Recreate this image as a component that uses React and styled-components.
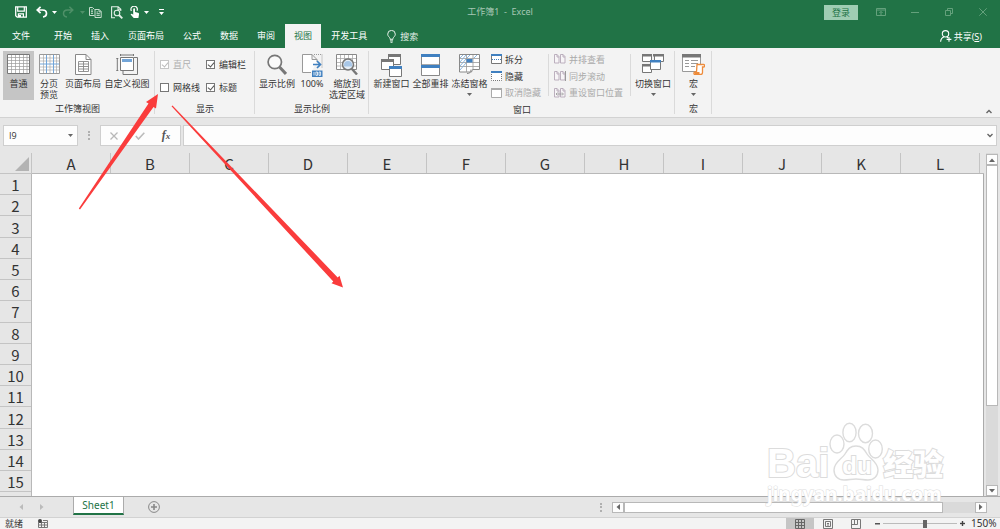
import styled, { createGlobalStyle } from 'styled-components';

const GlobalStyle = createGlobalStyle`
  * {
    box-sizing: border-box;
  }
  body {
    margin: 0;
    overflow: hidden;
    background-color: #e6e6e6;
    font-family: "Noto Sans", "Noto Sans CJK SC", sans-serif;
    font-size: 9px;
    line-height: 11px;
    color: #333;
  }
  button, input {
    font: inherit;
    color: inherit;
    margin: 0;
  }
  button {
    border: none;
    padding: 0;
    background: none;
    cursor: pointer;
  }
  svg {
    display: block;
    flex: none;
    fill: none;
  }
`;

const BLUE = '#4080c0';
const GRAY = '#777';

const tabs = ['开始', '插入', '页面布局', '公式', '数据', '审阅', '视图', '开发工具'];
const columns = ['A', 'B', 'C', 'D', 'E', 'F', 'G', 'H', 'I', 'J', 'K', 'L'];
const rows = [1, 2, 3, 4, 5, 6, 7, 8, 9, 10, 11, 12, 13, 14, 15];

/* ---------- icons ---------- */

const Caret = ({ color = '#666' }) => (
  <svg width="5" height="3" viewBox="0 0 5 3"><path d="M0 0h5L2.5 3z" fill={color} /></svg>
);

const SaveIcon = () => (
  <svg width="12" height="12" viewBox="0 0 12 12" stroke="#fff">
    <path d="M.7.8h10.6v10.4H2.2L.7 9.8z" strokeWidth="1.3" />
    <path d="M2.7 1v4.2h6.6V1M3.4 11V7.8h5V11" strokeWidth="1.2" />
    <path d="M4 9h2v2H4z" fill="#fff" stroke="none" />
  </svg>
);

const UndoIcon = () => (
  <svg width="12" height="12" viewBox="0 0 12 12" stroke="#fff" strokeWidth="1.7">
    <path d="M4.6.8L1.2 4l3.4 3.2M1.4 4h5.2c5 0 5.2 6.4.4 7" />
  </svg>
);

const RedoIcon = () => (
  <svg width="12" height="12" viewBox="0 0 12 12" stroke="#4f9068" strokeWidth="1.5">
    <path d="M7.4.8L10.8 4 7.4 7.2M10.6 4H5.4c-5 0-5.2 6.4-.4 7" />
  </svg>
);

const CopyIcon = () => (
  <svg width="13" height="12" viewBox="0 0 13 12" stroke="#c5dccd" strokeWidth="1">
    <path d="M5.5 9.5h-5v-8h3l2 2" />
    <path d="M6 3.5h4.2l2 2v6H6zM10 3.5v2.3h2.2M7.5 6h1.5M7.5 7.7h3.3M7.5 9.4h3.3M2 4h2M2 5.7h2M2 7.4h2" />
  </svg>
);

const PreviewIcon = () => (
  <svg width="12" height="13" viewBox="0 0 12 13" stroke="#e3efe7" strokeWidth="1.1">
    <path d="M4 11.8H.6V.7h6.6l2.6 2.6V5M7 .7v3h2.8" />
    <circle cx="6" cy="7" r="2.8" />
    <path d="M8 9l3.3 3.3" strokeWidth="1.8" />
  </svg>
);

const TouchIcon = () => (
  <svg width="10" height="13" viewBox="0 0 10 13">
    <path d="M1.4 5A3.2 3.2 0 1 1 7 4.8" stroke="#fff" strokeWidth="1.2" />
    <path d="M3.2 3.3c0-1.3 1.8-1.3 1.8 0V6l3 .7c1 .3 1.2.8 1 1.7L8.4 12H3.7L.6 8.4c.5-.8 1.5-.7 2.6.3z" fill="#fff" />
  </svg>
);

const CustomizeIcon = () => (
  <svg width="5" height="6" viewBox="0 0 5 6"><path d="M0 0h5v1H0zM0 3h5L2.5 6z" fill="#fff" /></svg>
);

const RibbonOptionsIcon = () => (
  <svg width="10" height="8" viewBox="0 0 10 8" stroke="#64a17c">
    <path d="M.5.5h9v7h-9zM.5 2h9M5 7V3.6M3.4 5L5 3.4 6.6 5" />
  </svg>
);
const MinimizeIcon = () => (
  <svg width="8" height="8" viewBox="0 0 8 8" stroke="#64a17c"><path d="M0 4.5h8" /></svg>
);
const RestoreIcon = () => (
  <svg width="8" height="8" viewBox="0 0 8 8" stroke="#64a17c"><path d="M.5 2.5h5v5h-5zM2.5 2V.5h5v5H6" /></svg>
);
const CloseIcon = () => (
  <svg width="8" height="8" viewBox="0 0 8 8" stroke="#64a17c"><path d="M.3.3l7.4 7.4M7.7.3L.3 7.7" /></svg>
);

const BulbIcon = () => (
  <svg width="9" height="13" viewBox="0 0 9 13" stroke="#e9f3ec">
    <path d="M3 9.3V8.4C2.6 7 .7 6.3.7 4.2a3.8 3.8 0 0 1 7.6 0C8.3 6.3 6.4 7 6 8.4v.9zM3 10.9h3M3.5 12.3h2" />
  </svg>
);

const ShareIcon = () => (
  <svg width="12" height="12" viewBox="0 0 12 12" stroke="#fff" strokeWidth="1.1">
    <circle cx="5.5" cy="3.8" r="3.2" />
    <path d="M.6 11.8C.8 9 2.3 7.3 4.2 6.7M6.8 6.7l1.3 1M9 7v4.8M6.6 9.4h4.8" />
  </svg>
);

const NormalViewIcon = () => (
  <svg width="23" height="20" viewBox="0 0 23 20">
    <path d="M.5.5h22v19H.5z" fill="#fff" stroke="#777" />
    <path d="M4.5 1v18M8.5 1v18M12.5 1v18M16.5 1v18M20 1v18M1 3.5h21M1 6.5h21M1 9.5h21M1 12.5h21M1 15.5h21" stroke="#999" strokeWidth=".7" />
  </svg>
);

const PageBreakIcon = () => (
  <svg width="21" height="20" viewBox="0 0 21 20">
    <path d="M.5.5h20v19H.5z" fill="#fff" stroke="#999" />
    <path d="M4.5 1v18M11 1v18M17.5 1v18M1 4h19M1 7h19M1 13h19M1 16h19" stroke="#aaa" strokeWidth=".7" />
    <path d="M7.5 1v18M14.5 1v18M1 10h19" stroke="#73a5d8" />
  </svg>
);

const PageLayoutIcon = () => (
  <svg width="17" height="21" viewBox="0 0 17 21">
    <path d="M.5.5H11l5 5v15H.5z" fill="#fff" stroke="#888" />
    <path d="M11 .5v5h5" stroke="#888" />
    <path d="M3.5 7.5h10v10h-10zM3.5 10h10M3.5 12.5h10M3.5 15h10M8.5 7.5v10" stroke="#888" strokeWidth=".9" />
  </svg>
);

const CustomViewIcon = () => (
  <svg width="22" height="21" viewBox="0 0 22 21">
    <path d="M18 3.5h3.5v17H7V17" stroke={GRAY} />
    <path d="M4.5 3.5h13v13h-13z" fill="#fff" stroke={GRAY} />
    <path d="M6 5h10v3H6z" fill="#73a5d8" />
    <path d="M4.5 0v2M4.5 1h13M17.5 0v2M.3 4.5h2M1.3 4.5v12M.3 16.5h2" stroke={GRAY} />
  </svg>
);

const ZoomIcon = () => (
  <svg width="20" height="21" viewBox="0 0 20 21">
    <circle cx="7.8" cy="8" r="6.7" stroke={GRAY} strokeWidth="1.7" fill="#fafafa" />
    <path d="M12.5 13l6.5 7" stroke={GRAY} strokeWidth="3" />
  </svg>
);

const Zoom100Icon = () => (
  <svg width="21" height="23" viewBox="0 0 21 23">
    <path d="M9 18.5H.5V.5H10l5 5v2M10 .5v5h5" fill="#fff" stroke="#999" />
    <path d="M12 .5h8v14" stroke="#999" strokeDasharray="1 1" />
    <path d="M11 10.5h7M15 7l3.5 3.5L15 14" stroke={BLUE} strokeWidth="1.7" />
    <path d="M10 16.5h10.5V23H10z" fill={BLUE} />
    <path d="M12 18v3.5M13.9 18h1.6v3.4h-1.6zM17 18h1.6v3.4H17z" stroke="#fff" strokeWidth=".8" />
  </svg>
);

const ZoomSelectionIcon = () => (
  <svg width="22" height="21" viewBox="0 0 22 21">
    <path d="M.5.5h20v15H.5z" fill="#fff" stroke="#888" />
    <path d="M4.5 1v14M8.5 1v14M12.5 1v14M16.5 1v14M1 4.5h19M1 8.5h19M1 12h19" stroke="#aaa" strokeWidth=".8" />
    <circle cx="12" cy="10.5" r="5.5" fill="#e6eef7" stroke={GRAY} strokeWidth="1.5" />
    <path d="M8 11a4 4 0 0 1 8 0v1.5H8z" fill="#a8c7e8" />
    <path d="M16 15l5 5.5" stroke={GRAY} strokeWidth="2.4" />
  </svg>
);

const NewWindowIcon = () => (
  <svg width="21" height="23" viewBox="0 0 21 23">
    <path d="M7.5 1.5h12v9h-12z" fill="#fff" stroke={GRAY} />
    <path d="M7 0h13v3H7z" fill={GRAY} />
    <path d="M.5 6.5h12v9H.5z" fill="#fff" stroke={GRAY} />
    <path d="M0 5h13v3H0z" fill={GRAY} />
    <path d="M8.5 13.5h12v9h-12z" fill="#fff" stroke={GRAY} />
    <path d="M8 12h13v3H8z" fill={BLUE} />
  </svg>
);

const ArrangeIcon = () => (
  <svg width="19" height="22" viewBox="0 0 19 22">
    <path d="M.5 1v20.5h18V1" fill="#fff" stroke="#888" />
    <path d="M0 0h19v3H0zM0 11h19v3H0z" fill={BLUE} />
    <path d="M1 10.5h17" stroke="#aaa" />
  </svg>
);

const FreezeIcon = () => (
  <svg width="21" height="20" viewBox="0 0 21 20">
    <path d="M.5.5h20v15h-7l-1 2.5H.5z" fill="#fff" stroke="#888" />
    <path d="M7.5 1v17M14 1v14M1 4.5h19M1 8.5h19M1 12.5h19" stroke="#999" strokeWidth=".8" />
    <path d="M1 4l3-3M1 8l6-7M8 4l3-3M15 4l3-3M1 12l6-7M1 16l6-7" stroke="#8bb6df" />
    <path d="M7.5 5h6v3.5h-6z" fill={BLUE} />
    <path d="M12 15.5c0 3-1.5 4-4 4" stroke="#888" />
  </svg>
);

const SmallWindow = ({ kind }) => {
  const bar = kind === 'unhide' ? '#aaa' : BLUE;
  const line = kind === 'unhide' ? '#aaa' : '#777';
  return (
    <svg width="11" height="10" viewBox="0 0 11 10">
      <path d="M.5 1v8.5h10V1" fill="#fff" stroke={line} strokeDasharray={kind === 'hide' ? '1 1' : undefined} />
      <path d="M0 0h11v2H0z" fill={bar} />
      {kind === 'split' && <path d="M1 5.5h9" stroke={BLUE} strokeDasharray="1 1" />}
    </svg>
  );
};

const PagesIcon = ({ kind }) => (
  <svg width="12" height="10" viewBox="0 0 12 10" stroke="#b5a8b8">
    <path d="M.5.5H3l2 2V9H.5zM6.5.5H9l2 2V9H6.5zM3 .5V3h2M9 .5V3h2" fill="#f7f5f7" strokeWidth=".9" />
    {kind === 'sync' && <path d="M11.5 0v10" stroke="#999" />}
    {kind === 'reset' && <path d="M2 6h7M3.5 4.5L2 6l1.5 1.5M8 4.5L9.5 6 8 7.5" stroke="#999" strokeWidth=".8" />}
  </svg>
);

const SwitchIcon = () => (
  <svg width="22" height="19" viewBox="0 0 22 19">
    <path d="M.5.5h9v7h-9zM12.5.5h9v7h-9zM.5 10.5h9v8h-9z" fill="#fff" stroke={GRAY} />
    <path d="M0 0h10v2.5H0zM11 0h11v2.5H11zM0 10h10v2.5H0z" fill={GRAY} />
    <path d="M8.5 7h10v8.5h-10z" fill="#fff" stroke={GRAY} />
    <path d="M8 6h11v2.5H8z" fill={BLUE} />
  </svg>
);

const MacroIcon = () => (
  <svg width="23" height="21" viewBox="0 0 23 21">
    <path d="M.5.5h18v17H.5z" fill="#fff" stroke="#999" />
    <path d="M0 0h19v3.5H0z" fill={GRAY} />
    <path d="M3 6.5h4M9 6.5h7M3 9.5h4M9 9.5h7M3 12.5h4M9 12.5h4" stroke="#999" />
    <path d="M15 10.5h6.5c1.5 0 1.5 2.5 0 2.5h-1v5.5c0 1-.8 2-2 2H13c-1.5 0-1.5-2.5 0-2.5h1.5z" fill="#fff" stroke="#ed8b3b" strokeWidth="1.3" />
    <path d="M12.5 18h5v2.5h-5z" fill="#ed8b3b" />
  </svg>
);

const CancelIcon = () => (
  <svg width="8" height="8" viewBox="0 0 8 8" stroke="#b8b8b8" strokeWidth="1.3"><path d="M.5.5l7 7M7.5.5l-7 7" /></svg>
);
const EnterIcon = () => (
  <svg width="10" height="8" viewBox="0 0 10 8" stroke="#bbb" strokeWidth="1.6"><path d="M.8 4l2.7 3L9.3.7" /></svg>
);
const ChevronIcon = ({ up }) => (
  <svg width="6" height="5" viewBox="0 0 6 5" stroke="#666" strokeWidth="1.4">
    <path d={up ? 'M.5 4L3 1.5 5.5 4' : 'M.5 1L3 3.5 5.5 1'} />
  </svg>
);
const ArrowIcon = ({ dir, color = '#666' }) => {
  const shapes = { left: 'M5 0v6L1.5 3z', right: 'M1 0v6l3.5-3z', up: 'M0 5h6L3 1.5z', down: 'M0 1h6L3 4.5z' };
  return <svg width="6" height="6" viewBox="0 0 6 6"><path d={shapes[dir]} fill={color} /></svg>;
};

const AddIcon = () => (
  <svg width="12" height="12" viewBox="0 0 12 12" stroke="#888">
    <circle cx="6" cy="6" r="5.4" />
    <path d="M3 6h6M6 3v6" strokeWidth="1.6" />
  </svg>
);
const RecordIcon = () => (
  <svg width="10" height="9" viewBox="0 0 10 9" stroke="#777">
    <path d="M.5 3.5h9v5h-9zM3.5 3.5v5M6.5 3.5v5M1 6h8M5 1.5h4.5v2" />
    <circle cx="2" cy="2" r="2" fill="#444" stroke="none" />
  </svg>
);
const GridIcon = () => (
  <svg width="10" height="10" viewBox="0 0 10 10" stroke="#666"><path d="M.5.5h9v9h-9zM3.5 0v10M6.5 0v10M0 3.5h10M0 6.5h10" /></svg>
);
const PageIcon = () => (
  <svg width="10" height="10" viewBox="0 0 10 10" stroke="#777"><path d="M.5.5h9v9h-9zM2.5 2.5h5v5h-5zM4 4.5h2M4 6h2" /></svg>
);
const BreakIcon = () => (
  <svg width="10" height="10" viewBox="0 0 10 10" stroke="#777"><path d="M.5.5h9v9h-9zM3.5 0v5.5M6.5 0v5.5M.5 5.5h6" /></svg>
);

const PawIcon = () => (
  <svg width="54" height="59" viewBox="0 0 54 59" fill="#fff" stroke="#dcdcdc" strokeWidth="1.4">
    <ellipse cx="8" cy="22" rx="7" ry="9" />
    <ellipse cx="20.5" cy="10.5" rx="6.6" ry="9.3" />
    <ellipse cx="36.5" cy="11.5" rx="7" ry="9.2" />
    <ellipse cx="46.5" cy="27" rx="6.8" ry="9" />
    <path d="M27 24c-6 0-8 3-11 8-3 5-11 8-11 16 0 6 4 10 10 10 4 0 8-1 12-1s8 1 12 1c6 0 10-4 10-10 0-8-8-11-11-16-3-5-5-8-11-8z" />
  </svg>
);

/* ---------- page ---------- */

const App = () => {
  return (
    <Window>
      <GlobalStyle />
      <TitleBar>
        <QuickAccess>
          <IconButton $w={24} aria-label="保存"><SaveIcon /></IconButton>
          <IconButton $w={18} aria-label="撤消"><UndoIcon /></IconButton>
          <IconButton $w={6} aria-label="撤消列表"><Caret color="#fff" /></IconButton>
          <IconButton $w={22} aria-label="恢复"><RedoIcon /></IconButton>
          <IconButton $w={6} aria-label="恢复列表"><Caret color="#4f9068" /></IconButton>
          <IconButton $w={20} aria-label="复制"><CopyIcon /></IconButton>
          <IconButton $w={24} aria-label="打印预览"><PreviewIcon /></IconButton>
          <IconButton $w={12} aria-label="触摸模式"><TouchIcon /></IconButton>
          <IconButton $w={10} aria-label="模式列表"><Caret color="#fff" /></IconButton>
          <IconButton $w={20} aria-label="自定义"><CustomizeIcon /></IconButton>
        </QuickAccess>
        <DocTitle>工作簿1 &nbsp;-&nbsp; Excel</DocTitle>
        <WindowControls>
          <LoginButton>登录</LoginButton>
          <IconButton $w={34} aria-label="功能区选项"><RibbonOptionsIcon /></IconButton>
          <IconButton $w={34} aria-label="最小化"><MinimizeIcon /></IconButton>
          <IconButton $w={34} aria-label="还原"><RestoreIcon /></IconButton>
          <IconButton $w={34} aria-label="关闭"><CloseIcon /></IconButton>
        </WindowControls>
      </TitleBar>

      <TabBar>
        <FileTab>文件</FileTab>
        {tabs.map((tab) => (
          <Tab key={tab} $active={tab === '视图'}>{tab}</Tab>
        ))}
        <Search><BulbIcon />搜索</Search>
        <Share><ShareIcon /><span>共享(<u>S</u>)</span></Share>
      </TabBar>

      <Ribbon>
        <Group>
          <Tools>
            <BigButton $w={31} $active><IconSlot><NormalViewIcon /></IconSlot>普通</BigButton>
            <BigButton $w={30}><IconSlot><PageBreakIcon /></IconSlot>分页<br />预览</BigButton>
            <BigButton $w={38}><IconSlot><PageLayoutIcon /></IconSlot>页面布局</BigButton>
            <BigButton $w={50}><IconSlot><CustomViewIcon /></IconSlot>自定义视图</BigButton>
          </Tools>
          <GroupLabel>工作簿视图</GroupLabel>
        </Group>
        <Group>
          <Checks>
            <CheckLabel $disabled><CheckBox type="checkbox" defaultChecked disabled />直尺</CheckLabel>
            <CheckLabel><CheckBox type="checkbox" defaultChecked />编辑栏</CheckLabel>
            <CheckLabel><CheckBox type="checkbox" />网格线</CheckLabel>
            <CheckLabel><CheckBox type="checkbox" defaultChecked />标题</CheckLabel>
          </Checks>
          <GroupLabel>显示</GroupLabel>
        </Group>
        <Group>
          <Tools>
            <BigButton $w={38}><IconSlot><ZoomIcon /></IconSlot>显示比例</BigButton>
            <BigButton $w={32}><IconSlot><Zoom100Icon /></IconSlot>100%</BigButton>
            <BigButton $w={38}><IconSlot><ZoomSelectionIcon /></IconSlot>缩放到<br />选定区域</BigButton>
          </Tools>
          <GroupLabel>显示比例</GroupLabel>
        </Group>
        <Group>
          <Tools>
            <BigButton $w={39}><IconSlot><NewWindowIcon /></IconSlot>新建窗口</BigButton>
            <BigButton $w={39}><IconSlot><ArrangeIcon /></IconSlot>全部重排</BigButton>
            <BigButton $w={39}><IconSlot><FreezeIcon /></IconSlot>冻结窗格<CaretSlot><Caret /></CaretSlot></BigButton>
            <SmallStack>
              <SmallButton><SmallWindow kind="split" />拆分</SmallButton>
              <SmallButton><SmallWindow kind="hide" />隐藏</SmallButton>
              <SmallButton disabled><SmallWindow kind="unhide" />取消隐藏</SmallButton>
            </SmallStack>
            <Divider />
            <SmallStack>
              <SmallButton disabled><PagesIcon />并排查看</SmallButton>
              <SmallButton disabled><PagesIcon kind="sync" />同步滚动</SmallButton>
              <SmallButton disabled><PagesIcon kind="reset" />重设窗口位置</SmallButton>
            </SmallStack>
            <Divider />
            <BigButton $w={38}><IconSlot><SwitchIcon /></IconSlot>切换窗口<CaretSlot><Caret /></CaretSlot></BigButton>
          </Tools>
          <GroupLabel>窗口</GroupLabel>
        </Group>
        <Group>
          <Tools>
            <BigButton $w={31}><IconSlot><MacroIcon /></IconSlot>宏<CaretSlot><Caret /></CaretSlot></BigButton>
          </Tools>
          <GroupLabel>宏</GroupLabel>
        </Group>
        <Collapse aria-label="折叠功能区"><ChevronIcon up /></Collapse>
      </Ribbon>

      <FormulaBar>
        <NameBox>
          <NameInput aria-label="名称框" defaultValue="I9" />
          <IconButton $w={13} aria-label="名称列表"><Caret /></IconButton>
        </NameBox>
        <Grip />
        <FormulaButtons>
          <IconButton $w={26} aria-label="取消"><CancelIcon /></IconButton>
          <IconButton $w={26} aria-label="输入"><EnterIcon /></IconButton>
          <IconButton $w={26} aria-label="插入函数"><Fx>f<small>x</small></Fx></IconButton>
        </FormulaButtons>
        <FormulaBox>
          <FormulaInput aria-label="编辑栏" />
          <IconButton $w={12} aria-label="展开编辑栏"><ChevronIcon /></IconButton>
        </FormulaBox>
      </FormulaBar>

      <Workspace>
        <Sheet>
          <SelectAll aria-label="全选">
            <svg width="14" height="14" viewBox="0 0 14 14"><path d="M14 0v14H0z" fill="#b3b3b3" /></svg>
          </SelectAll>
          <ColumnHeads>
            {columns.map((c) => <ColumnHead key={c}>{c}</ColumnHead>)}
            <ColumnRest />
          </ColumnHeads>
          <RowHeads>
            {rows.map((r) => <RowHead key={r}>{r}</RowHead>)}
            <RowRest />
          </RowHeads>
          <Cells />
        </Sheet>
        <VScroll>
          <ScrollButton aria-label="向上"><ArrowIcon dir="up" /></ScrollButton>
          <VThumb />
          <VTrack />
          <ScrollButton aria-label="向下"><ArrowIcon dir="down" /></ScrollButton>
        </VScroll>
      </Workspace>

      <SheetBar>
        <SheetNav>
          <ArrowIcon dir="left" color="#bbb" />
          <ArrowIcon dir="right" color="#bbb" />
        </SheetNav>
        <SheetTab>Sheet1</SheetTab>
        <AddSheet aria-label="新工作表"><AddIcon /></AddSheet>
        <Grip />
        <HScroll>
          <ScrollButton aria-label="向左"><ArrowIcon dir="left" /></ScrollButton>
          <HThumb />
          <HTrack />
          <ScrollButton aria-label="向右"><ArrowIcon dir="right" /></ScrollButton>
        </HScroll>
      </SheetBar>

      <StatusBar>
        <StatusText>就绪</StatusText>
        <RecordIcon />
        <Views>
          <ViewButton $active aria-label="普通"><GridIcon /></ViewButton>
          <ViewButton aria-label="页面布局"><PageIcon /></ViewButton>
          <ViewButton aria-label="分页预览"><BreakIcon /></ViewButton>
        </Views>
        <ZoomStep aria-label="缩小">
          <svg width="5" height="5" viewBox="0 0 5 5"><path d="M0 2h5v1.5H0z" fill="#555" /></svg>
        </ZoomStep>
        <ZoomSlider type="range" min="0" max="100" defaultValue="57" aria-label="缩放" />
        <ZoomStep aria-label="放大">
          <svg width="5" height="5" viewBox="0 0 5 5"><path d="M0 2h5v1H0zM2 0h1v5H2z" fill="#444" stroke="#444" strokeWidth=".4" /></svg>
        </ZoomStep>
        <ZoomValue>150%</ZoomValue>
      </StatusBar>

      <Arrows viewBox="0 0 350 300" width="350" height="300">
        <path d="M78.8 208.5L148.5 103.5 146 102 158 94 156 108.5 153.5 107 80 209.5z" />
        <path d="M171.5 106.2L333.3 281.6 331.5 283.3 343 287.5 339.5 275.7 337.7 277.4 172.5 105.5z" />
      </Arrows>

      <Watermark>
        <Brand>
          <BrandLatin>Bai</BrandLatin>
          <Paw><PawIcon /><PawText>du</PawText></Paw>
          <BrandHan>经验</BrandHan>
        </Brand>
        <Site>jingyan.baidu.com</Site>
      </Watermark>
    </Window>
  );
};

const Window = styled.div`
  position: relative;
  height: 100vh;
  display: flex;
  flex-direction: column;
  overflow: hidden;
`;

const TitleBar = styled.header`
  height: 24px;
  flex: none;
  display: grid;
  grid-template-columns: 1fr auto 1fr;
  align-items: center;
  background-color: #217346;
`;

const QuickAccess = styled.div`
  display: flex;
  align-items: center;
  padding-left: 9px;
`;

const IconButton = styled.button`
  width: ${(p) => p.$w}px;
  height: 16px;
  flex: none;
  display: flex;
  align-items: center;
  justify-content: center;
`;

const DocTitle = styled.div`
  padding-bottom: 2px;
  color: #a6c7b5;
`;

const WindowControls = styled.div`
  display: flex;
  align-items: center;
  justify-content: flex-end;
`;

const LoginButton = styled.button`
  width: 34px;
  height: 15px;
  margin-right: 6px;
  background-color: #9fcdb3;
  color: #217346;
`;

const TabBar = styled.nav`
  height: 24px;
  flex: none;
  display: flex;
  gap: 1px;
  background-color: #217346;
  color: #fff;
`;

const Tab = styled.button`
  padding: 0 9px 1px;
  background-color: ${(p) => (p.$active ? '#f3f3f3' : 'transparent')};
  color: ${(p) => (p.$active ? '#217346' : '#fff')};
`;

const FileTab = styled(Tab)`
  padding: 0 12px 1px;
  margin-right: 2px;
`;

const Search = styled.button`
  display: flex;
  align-items: center;
  gap: 4px;
  margin-left: 10px;
  color: #e3efe7;
`;

const Share = styled.button`
  display: flex;
  align-items: center;
  gap: 2px;
  margin-left: auto;
  padding-right: 18px;
`;

const Ribbon = styled.section`
  height: 70px;
  flex: none;
  display: flex;
  padding-top: 3px;
  border-bottom: 1px solid #d2d2d2;
  background-color: #f3f3f3;
`;

const Group = styled.div`
  display: flex;
  flex-direction: column;
  padding: 0 2px 0 3px;
  margin-bottom: 3px;
  border-right: 1px solid #dadada;
`;

const Tools = styled.div`
  height: 50px;
  display: flex;
`;

const GroupLabel = styled.div`
  padding-top: 3px;
  text-align: center;
`;

const BigButton = styled.button`
  width: ${(p) => p.$w}px;
  display: flex;
  flex-direction: column;
  align-items: center;
  white-space: nowrap;
  background-color: ${(p) => (p.$active ? '#c5c5c5' : 'transparent')};
`;

const IconSlot = styled.span`
  height: 27px;
  padding-top: 3px;
`;

const CaretSlot = styled.span`
  padding-top: 4px;
`;

const SmallStack = styled.div`
  display: flex;
  flex-direction: column;
  padding-left: 2px;
`;

const SmallButton = styled.button`
  height: 17px;
  display: flex;
  align-items: center;
  gap: 3px;
  white-space: nowrap;
  color: ${(p) => (p.disabled ? '#aaa' : '#333')};
`;

const Divider = styled.div`
  width: 1px;
  height: 42px;
  margin: 3px 3px 0 7px;
  background-color: #dadada;
`;

const Checks = styled.div`
  height: 50px;
  display: grid;
  grid-template-columns: 46px 44px;
  grid-auto-rows: 23px;
  padding: 2px 2px 0;
`;

const CheckLabel = styled.label`
  display: flex;
  align-items: center;
  gap: 4px;
  white-space: nowrap;
  color: ${(p) => (p.$disabled ? '#b0b0b0' : '#333')};
`;

const CheckBox = styled.input`
  appearance: none;
  width: 9px;
  height: 9px;
  flex: none;
  display: flex;
  justify-content: center;
  border: 1px solid #777;
  background-color: #fff;
  &:disabled {
    border-color: #c6c6c6;
  }
  &:checked::after {
    content: '';
    width: 3px;
    height: 5px;
    border: solid #555;
    border-width: 0 1px 1px 0;
    transform: rotate(40deg);
  }
  &:disabled::after {
    border-color: #bbb;
  }
`;

const Collapse = styled.button`
  margin-left: auto;
  padding: 0 8px 3px;
  align-self: flex-end;
`;

const FormulaBar = styled.div`
  height: 35px;
  flex: none;
  display: flex;
  align-items: center;
  padding: 0 3px;
`;

const Field = styled.div`
  height: 21px;
  display: flex;
  align-items: center;
  border: 1px solid #cfcfcf;
  background-color: #fdfdfd;
`;

const NameBox = styled(Field)`
  width: 75px;
`;

const NameInput = styled.input`
  width: 60px;
  border: none;
  outline: none;
  padding: 0 5px;
  background: none;
  font-family: "Open Sans", sans-serif;
`;

const Grip = styled.div`
  width: 2px;
  height: 9px;
  flex: none;
  margin: 0 10px;
  border-left: 2px dotted #b0b0b0;
`;

const FormulaButtons = styled(Field)`
  width: 81px;
  margin-right: 2px;
`;

const Fx = styled.span`
  font-family: "Liberation Serif", serif;
  font-size: 12px;
  font-style: italic;
  font-weight: bold;
  color: #555;
  small {
    font-size: 9px;
  }
`;

const FormulaBox = styled(Field)`
  flex: 1;
`;

const FormulaInput = styled.input`
  flex: 1;
  min-width: 0;
  border: none;
  outline: none;
  background: none;
`;

const Workspace = styled.main`
  flex: 1;
  min-height: 0;
  display: flex;
  padding-right: 2px;
`;

const Sheet = styled.div`
  flex: 1;
  min-width: 0;
  display: grid;
  grid-template-columns: 32px 1fr;
  grid-template-rows: 21px 1fr;
  margin-right: 2px;
  font-family: "Noto Sans CJK SC", sans-serif;
  font-size: 15px;
  line-height: 19px;
`;

const SelectAll = styled.button`
  display: flex;
  align-items: flex-end;
  justify-content: flex-end;
  padding: 0 2px 2px 0;
  border-right: 1px solid #c4c4c4;
  border-bottom: 1px solid #c4c4c4;
`;

const ColumnHeads = styled.div`
  display: flex;
  border-bottom: 1px solid #b8b8b8;
`;

const ColumnHead = styled.div`
  flex: 79 0 0;
  min-width: 0;
  text-align: center;
  padding-top: 1px;
  border-right: 1px solid #c4c4c4;
`;

const ColumnRest = styled.div`
  flex: 4 0 0;
`;

const RowHeads = styled.div`
  display: flex;
  flex-direction: column;
  border-right: 1px solid #b8b8b8;
`;

const RowHead = styled.div`
  flex: 21 0 0;
  min-height: 0;
  display: flex;
  align-items: center;
  justify-content: center;
  padding-top: 1px;
  border-bottom: 1px solid #c4c4c4;
`;

const RowRest = styled.div`
  flex: 4 0 0;
`;

const Cells = styled.div`
  background-color: #fff;
  border-right: 1px solid #ababab;
`;

const VScroll = styled.div`
  width: 12px;
  display: flex;
  flex-direction: column;
  padding-top: 1px;
  background-color: #dadada;
`;

const ScrollButton = styled.button`
  width: 12px;
  height: 11px;
  flex: none;
  display: flex;
  align-items: center;
  justify-content: center;
  border: 1px solid #b8b8b8;
  background-color: #fdfdfd;
`;

const VThumb = styled.div`
  flex: 3;
  border: 1px solid #b8b8b8;
  background-color: #fff;
`;

const VTrack = styled.div`
  flex: 1;
`;

const SheetBar = styled.div`
  height: 21px;
  flex: none;
  display: flex;
  align-items: center;
  border-top: 1px solid #ababab;
`;

const SheetNav = styled.div`
  width: 73px;
  display: flex;
  gap: 15px;
  padding-left: 18px;
`;

const SheetTab = styled.button`
  width: 51px;
  height: 18px;
  align-self: flex-start;
  border: solid #ababab;
  border-width: 0 1px;
  border-bottom: 2px solid #217346;
  background-color: #fff;
  color: #217346;
  font-size: 10px;
`;

const AddSheet = styled.button`
  margin-left: 24px;
  margin-right: auto;
`;

const HScroll = styled.div`
  width: 38%;
  max-width: 375px;
  height: 11px;
  display: flex;
  margin-right: 13px;
  background-color: #dadada;
`;

const HThumb = styled.div`
  flex: 10;
  border: 1px solid #b8b8b8;
  background-color: #fff;
`;

const HTrack = styled.div`
  flex: 1;
`;

const StatusBar = styled.footer`
  height: 12px;
  flex: none;
  display: flex;
  align-items: center;
  padding: 0 6px 0 5px;
  border-top: 1px solid #d2d2d2;
  background-color: #f3f3f3;
`;

const StatusText = styled.span`
  width: 33px;
`;

const Views = styled.div`
  display: flex;
  margin-left: auto;
  margin-right: 2px;
`;

const ViewButton = styled.button`
  width: 28px;
  height: 11px;
  display: flex;
  align-items: center;
  justify-content: center;
  background-color: ${(p) => (p.$active ? '#c5c5c5' : 'transparent')};
`;

const ZoomStep = styled.button`
  margin: 0 3px;
`;

const ZoomSlider = styled.input`
  appearance: none;
  width: 74px;
  height: 9px;
  background: linear-gradient(#bbb, #bbb) center / 100% 1px no-repeat;
  &::-webkit-slider-thumb {
    appearance: none;
    width: 4px;
    height: 8px;
    background-color: #666;
  }
`;

const ZoomValue = styled.span`
  width: 26px;
  padding-left: 3px;
  font-size: 10px;
`;

/* annotation arrows drawn on top of the window */
const Arrows = styled.svg`
  position: absolute;
  top: 0;
  left: 0;
  fill: #fa3c3c;
  pointer-events: none;
`;

const Watermark = styled.div`
  position: absolute;
  right: 54px;
  bottom: 22px;
  width: 179px;
  pointer-events: none;
  color: #fff;
  font-family: "Liberation Sans", "Noto Sans CJK SC", sans-serif;
  font-weight: bold;
  -webkit-text-stroke: 2px #dcdcdc;
  paint-order: stroke fill;
`;

const Brand = styled.div`
  display: flex;
  align-items: flex-end;
`;

const BrandLatin = styled.span`
  font-size: 40px;
  line-height: 36px;
`;

const Paw = styled.span`
  position: relative;
`;

const PawText = styled.span`
  position: absolute;
  left: 13px;
  bottom: 3px;
  font-size: 24px;
  line-height: 24px;
`;

const BrandHan = styled.span`
  font-family: "Noto Sans CJK SC", sans-serif;
  font-weight: 900;
  font-size: 30px;
  line-height: 38px;
`;

const Site = styled.div`
  font-family: "Noto Sans", sans-serif;
  font-size: 19px;
  line-height: 26px;
  -webkit-text-stroke: 1px #dcdcdc;
`;

export default App;
